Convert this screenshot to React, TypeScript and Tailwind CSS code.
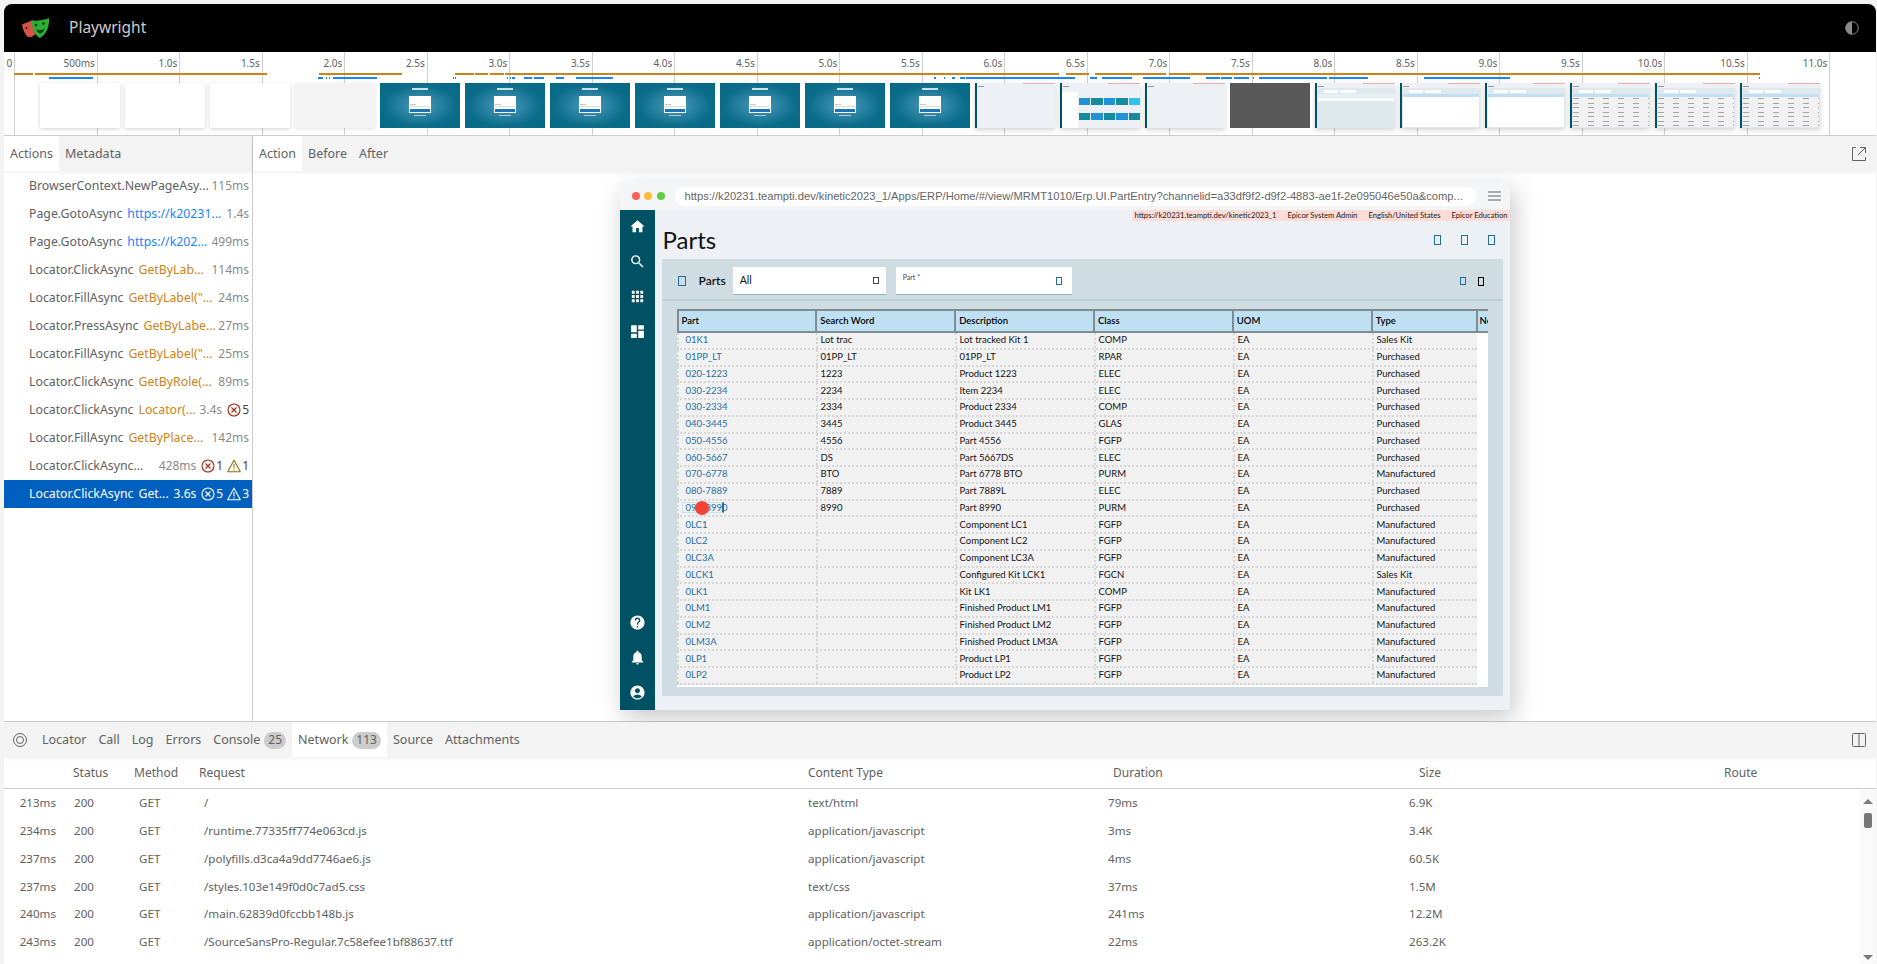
import { MdAccountCircle, MdApps, MdDashboard, MdHelp, MdHome, MdNotifications, MdSearch } from 'react-icons/md'

const ticks = ['0', '500ms', '1.0s', '1.5s', '2.0s', '2.5s', '3.0s', '3.5s', '4.0s', '4.5s', '5.0s', '5.5s', '6.0s', '6.5s', '7.0s', '7.5s', '8.0s', '8.5s', '9.0s', '9.5s', '10.0s', '10.5s', '11.0s']

const orangeBars = [[14, 33], [35, 267], [319, 402], [455, 474], [475, 488], [490, 504], [505, 1059], [1066, 1089], [1095, 1166], [1169, 1760]]
const blueBars = [[49, 93], [318, 323], [326, 327], [329, 330], [333, 377], [453, 454], [455, 456], [507, 508], [510, 511], [512, 515], [524, 532], [534, 544], [556, 564], [576, 613], [934, 936], [944, 945], [952, 955], [960, 961], [961, 965], [966, 1075], [1090, 1097], [1102, 1132], [1143, 1190], [1206, 1220], [1221, 1232], [1234, 1249], [1253, 1254], [1259, 1327], [1329, 1368], [1424, 1510], [1759, 1760]]

type Thumb = 'blank' | 'grey' | 'login' | 'app' | 'tiles' | 'dark' | 'form' | 'white' | 'grid'
const thumbs: Thumb[] = ['blank', 'blank', 'blank', 'grey', 'login', 'login', 'login', 'login', 'login', 'login', 'login', 'app', 'tiles', 'app', 'dark', 'form', 'white', 'white', 'grid', 'grid', 'grid']

type Action = { name: string; arg?: string; argColor?: 'blue' | 'orange'; time: string; errors?: number; warnings?: number }
const actions: Action[] = [
  { name: 'BrowserContext.NewPageAsy...', time: '115ms' },
  { name: 'Page.GotoAsync', arg: 'https://k20231...', argColor: 'blue', time: '1.4s' },
  { name: 'Page.GotoAsync', arg: 'https://k202...', argColor: 'blue', time: '499ms' },
  { name: 'Locator.ClickAsync', arg: 'GetByLab...', argColor: 'orange', time: '114ms' },
  { name: 'Locator.FillAsync', arg: 'GetByLabel("...', argColor: 'orange', time: '24ms' },
  { name: 'Locator.PressAsync', arg: 'GetByLabe...', argColor: 'orange', time: '27ms' },
  { name: 'Locator.FillAsync', arg: 'GetByLabel("...', argColor: 'orange', time: '25ms' },
  { name: 'Locator.ClickAsync', arg: 'GetByRole(...', argColor: 'orange', time: '89ms' },
  { name: 'Locator.ClickAsync', arg: 'Locator(...', argColor: 'orange', time: '3.4s', errors: 5 },
  { name: 'Locator.FillAsync', arg: 'GetByPlace...', argColor: 'orange', time: '142ms' },
  { name: 'Locator.ClickAsync...', time: '428ms', errors: 1, warnings: 1 },
  { name: 'Locator.ClickAsync', arg: 'Get...', time: '3.6s', errors: 5, warnings: 3 },
]

const parts = [
  ['01K1', 'Lot trac', 'Lot tracked Kit 1', 'COMP', 'EA', 'Sales Kit'],
  ['01PP_LT', '01PP_LT', '01PP_LT', 'RPAR', 'EA', 'Purchased'],
  ['020-1223', '1223', 'Product 1223', 'ELEC', 'EA', 'Purchased'],
  ['030-2234', '2234', 'Item 2234', 'ELEC', 'EA', 'Purchased'],
  ['030-2334', '2334', 'Product 2334', 'COMP', 'EA', 'Purchased'],
  ['040-3445', '3445', 'Product 3445', 'GLAS', 'EA', 'Purchased'],
  ['050-4556', '4556', 'Part 4556', 'FGFP', 'EA', 'Purchased'],
  ['060-5667', 'DS', 'Part 5667DS', 'ELEC', 'EA', 'Purchased'],
  ['070-6778', 'BTO', 'Part 6778 BTO', 'PURM', 'EA', 'Manufactured'],
  ['080-7889', '7889', 'Part 7889L', 'ELEC', 'EA', 'Purchased'],
  ['090-8990', '8990', 'Part 8990', 'PURM', 'EA', 'Purchased'],
  ['0LC1', '', 'Component LC1', 'FGFP', 'EA', 'Manufactured'],
  ['0LC2', '', 'Component LC2', 'FGFP', 'EA', 'Manufactured'],
  ['0LC3A', '', 'Component LC3A', 'FGFP', 'EA', 'Manufactured'],
  ['0LCK1', '', 'Configured Kit LCK1', 'FGCN', 'EA', 'Sales Kit'],
  ['0LK1', '', 'Kit LK1', 'COMP', 'EA', 'Manufactured'],
  ['0LM1', '', 'Finished Product LM1', 'FGFP', 'EA', 'Manufactured'],
  ['0LM2', '', 'Finished Product LM2', 'FGFP', 'EA', 'Manufactured'],
  ['0LM3A', '', 'Finished Product LM3A', 'FGFP', 'EA', 'Manufactured'],
  ['0LP1', '', 'Product LP1', 'FGFP', 'EA', 'Manufactured'],
  ['0LP2', '', 'Product LP2', 'FGFP', 'EA', 'Manufactured'],
]

const requests = [
  ['213ms', '200', 'GET', '/', 'text/html', '79ms', '6.9K'],
  ['234ms', '200', 'GET', '/runtime.77335ff774e063cd.js', 'application/javascript', '3ms', '3.4K'],
  ['237ms', '200', 'GET', '/polyfills.d3ca4a9dd7746ae6.js', 'application/javascript', '4ms', '60.5K'],
  ['237ms', '200', 'GET', '/styles.103e149f0d0c7ad5.css', 'text/css', '37ms', '1.5M'],
  ['240ms', '200', 'GET', '/main.62839d0fccbb148b.js', 'application/javascript', '241ms', '12.2M'],
  ['243ms', '200', 'GET', '/SourceSansPro-Regular.7c58efee1bf88637.ttf', 'application/octet-stream', '22ms', '263.2K'],
]

const Logo = () => (
  <svg width="28" height="22" viewBox="0 0 28 22" className="ml-[18px]">
    <path d="M0 7.500 L10 3.500 L14 17 C11 19.500 8 20.500 6 20 C3 17.500 .7 12.500 0 7.500Z" fill="#d65348" />
    <path d="M9.500 3 C13 4.500 20 3.500 27 1 C27.500 9 25 17 18 21 C13 19 10 11 9.500 3Z" fill="#2ead33" />
    <circle cx="14" cy="8" r="1.300" fill="#0b3d12" />
    <circle cx="21.500" cy="6.500" r="1.300" fill="#0b3d12" />
    <circle cx="4.500" cy="11" r="1" fill="#3a1512" />
    <path d="M14.500 12 C17 14 20 13.500 22.500 11 C22 15 19 17 17.500 16.500 C16 16 15 14 14.500 12Z" fill="#0b3d12" />
  </svg>
)

const ThemeIcon = () => (
  <svg width="14" height="14" viewBox="0 0 14 14">
    <circle cx="7" cy="7" r="6.300" fill="none" stroke="#8a8a8a" strokeWidth="1" />
    <path d="M7 .7 A6.300 6.300 0 0 0 7 13.300Z" fill="#8a8a8a" />
  </svg>
)

const Box = ({ className }: { className: string }) => <span className={`block shrink-0 border ${className}`} />

const ThumbView = ({ kind }: { kind: Thumb }) => {
  if (kind === 'blank') return <div className="h-[45px] w-[80px] shrink-0 bg-white shadow-[0_1px_4px_rgba(0,0,0,0.18)]" />
  if (kind === 'grey') return <div className="h-[45px] w-[80px] shrink-0 bg-[#f3f3f3] shadow-[0_1px_4px_rgba(0,0,0,0.12)]" />
  if (kind === 'dark') return <div className="h-[45px] w-[80px] shrink-0 bg-[#585858]" />
  if (kind === 'login') {
    return (
      <div className="flex h-[45px] w-[80px] shrink-0 flex-col items-center bg-[radial-gradient(ellipse_at_center,#4c9bbd_0%,#0b6d89_65%,#066984_100%)] pt-[5px]">
        <div className="h-[2px] w-[16px] bg-[#cfe2ea]" />
        <div className="mt-[6px] flex h-[17px] w-[22px] flex-col justify-end bg-white p-[1px]">
          <div className="mt-[1px] mb-[1px] h-[1px] w-[6px] bg-[#c8c8c8]" />
          <div className="mb-[2px] h-[1px] w-full bg-[#dddddd]" />
          <div className="h-[3px] w-full bg-[#1b74b5]" />
        </div>
        <div className="mt-[2px] h-[1px] w-[12px] bg-[#a9cbd8]" />
      </div>
    )
  }
  return (
    <div className="flex h-[45px] w-[80px] shrink-0 bg-[#edf1f5] shadow-[0_2px_5px_rgba(0,0,0,0.18)]">
      <div className="w-[2px] shrink-0 bg-[#005164]" />
      <div className="flex min-w-0 flex-1 flex-col">
        <div className="ml-auto h-[1px] w-[32px] bg-[#e5b0a8]" />
        <div className="mt-[2px] ml-[1px] h-[1px] w-[6px] bg-[#999999]" />
        {kind === 'tiles' && (
          <div className="mt-[5px] flex flex-1 gap-[1px]">
            <div className="w-[16px] bg-white" />
            <div className="flex flex-1 flex-col gap-[8px] pt-[6px]">
              <div className="grid h-[7px] grid-cols-5 gap-[1px]">
                <div className="bg-[#1f93d9]" />
                <div className="bg-[#158b9f]" />
                <div className="bg-[#1f93d9]" />
                <div className="bg-[#158b9f]" />
                <div className="bg-[#2cc2ee]" />
              </div>
              <div className="grid h-[7px] grid-cols-5 gap-[1px]">
                <div className="bg-[#158b9f]" />
                <div className="bg-[#1f93d9]" />
                <div className="bg-[#158b9f]" />
                <div className="bg-[#1f93d9]" />
                <div className="bg-[#158b9f]" />
              </div>
            </div>
          </div>
        )}
        {(kind === 'form' || kind === 'white' || kind === 'grid') && (
          <div className="mt-[1px] flex flex-1 flex-col bg-[#dfe8ec] px-[1px] pb-[1px]">
            <div className="flex h-[6px] items-center gap-[2px] pl-[6px]">
              <div className="h-[3px] w-[14px] bg-white" />
              <div className="h-[3px] w-[16px] bg-white" />
            </div>
            <div className={`h-[3px] ${kind === 'form' ? 'bg-[#e6f1f7]' : 'bg-[#bfe0f3]'}`} />
            {kind === 'form' && <div className="mt-[1px] h-[3px] bg-white" />}
            {kind === 'white' && <div className="flex-1 bg-white" />}
            {kind === 'grid' && (
              <div className="flex flex-1 flex-col justify-between bg-[#f1f1f1] py-[1px]">
                <div className="h-[1px] bg-[repeating-linear-gradient(90deg,#a5a5a5_0_6px,transparent_6px_15px)]" />
                <div className="h-[1px] bg-[repeating-linear-gradient(90deg,#a5a5a5_0_6px,transparent_6px_15px)]" />
                <div className="h-[1px] bg-[repeating-linear-gradient(90deg,#a5a5a5_0_6px,transparent_6px_15px)]" />
                <div className="h-[1px] bg-[repeating-linear-gradient(90deg,#a5a5a5_0_6px,transparent_6px_15px)]" />
                <div className="h-[1px] bg-[repeating-linear-gradient(90deg,#a5a5a5_0_6px,transparent_6px_15px)]" />
                <div className="h-[1px] bg-[repeating-linear-gradient(90deg,#a5a5a5_0_6px,transparent_6px_15px)]" />
                <div className="h-[1px] bg-[repeating-linear-gradient(90deg,#a5a5a5_0_6px,transparent_6px_15px)]" />
              </div>
            )}
          </div>
        )}
      </div>
    </div>
  )
}

const Timeline = () => (
  <div className="relative h-[84px] shrink-0 overflow-hidden border-b border-[#cccccc] bg-white">
    {ticks.map((label, i) => (
      <div key={label} className="absolute top-0 bottom-0 w-px bg-[#cfcfcf]" style={{ left: 10.3 + i * 82.5 }}>
        <span className="absolute top-[2px] right-[3px] text-[10px] leading-[18px] whitespace-nowrap text-[#616161]">{label}</span>
      </div>
    ))}
    {orangeBars.map(([a, b]) => (
      <div key={a} className="absolute top-[21px] h-[2px] bg-[#cc8418]" style={{ left: a - 4, width: b - a }} />
    ))}
    {blueBars.map(([a, b]) => (
      <div key={a} className="absolute top-[25px] h-[2px] bg-[#1a85ff]" style={{ left: a - 4, width: b - a }} />
    ))}
    <div className="absolute top-[31px] left-[36px] flex gap-[5px]">
      {thumbs.map((kind, i) => (
        <ThumbView key={i} kind={kind} />
      ))}
    </div>
  </div>
)

const ErrorIcon = ({ light }: { light: boolean }) => (
  <svg width="14" height="14" viewBox="0 0 14 14" fill="none" stroke={light ? '#ffffff' : '#a1260d'} strokeWidth="1.100">
    <circle cx="7" cy="7" r="6" />
    <path d="M4.500 4.500 L9.500 9.500 M9.500 4.500 L4.500 9.500" />
  </svg>
)

const WarnIcon = ({ light }: { light: boolean }) => (
  <svg width="14" height="14" viewBox="0 0 14 14" fill="none" stroke={light ? '#ffffff' : '#9a6c08'} strokeWidth="1.100">
    <path d="M7 1.200 L13.300 12.800 H.7Z" strokeLinejoin="round" />
    <path d="M7 5 V9.300 M7 10.300 V11.500" />
  </svg>
)

const ActionRow = ({ action, selected }: { action: Action; selected: boolean }) => (
  <div className={`flex h-[28px] items-center pr-[3px] pl-[25px] text-[12.300px] whitespace-nowrap ${selected ? 'bg-[#0060c0] text-white' : 'text-[#616161]'}`}>
    <span>{action.name}</span>
    {action.arg && (
      <span className={`ml-[5px] ${action.argColor === 'blue' ? 'text-[#1a85ff]' : action.argColor === 'orange' ? 'text-[#cc8418]' : ''}`}>{action.arg}</span>
    )}
    <span className={`ml-auto text-[12px] ${selected ? 'text-white' : 'text-[#8a8a8a]'}`}>{action.time}</span>
    {action.errors ? (
      <span className={`ml-[5px] flex items-center gap-[1px] text-[12px] ${selected ? 'text-white' : 'text-[#444444]'}`}>
        <ErrorIcon light={selected} />
        {action.errors}
      </span>
    ) : null}
    {action.warnings ? (
      <span className={`ml-[4px] flex items-center gap-[1px] text-[12px] ${selected ? 'text-white' : 'text-[#444444]'}`}>
        <WarnIcon light={selected} />
        {action.warnings}
      </span>
    ) : null}
  </div>
)

const colWidths = ['w-[139px]', 'w-[139px]', 'w-[139px]', 'w-[139px]', 'w-[139px]', 'w-[105px]']

const PartsGrid = () => (
  <div className="mx-[15px] mt-[8px] flex h-[378px] w-[811px] flex-col bg-white">
    <div className="flex h-[24px] shrink-0 border-y-2 border-[#7f8c93] bg-[#bfe0f3] text-[9.500px] font-semibold text-black">
      {['Part', 'Search Word', 'Description', 'Class', 'UOM', 'Type'].map((h, i) => (
        <div key={h} className={`flex items-center border-l-2 border-[#7f8c93] pl-[3px] ${colWidths[i]}`}>
          {h}
        </div>
      ))}
      <div className="flex w-[12px] items-center overflow-hidden border-l-2 border-[#7f8c93] pl-[2px]">Ne</div>
    </div>
    {parts.map((row) => (
      <div key={row[0]} className="flex h-[16.760px] w-[800px] shrink-0 border-b-2 border-dotted border-[#d6d6d6] bg-[#f1f1f1] text-[9.500px] leading-[14px] text-[#111111]">
        {row.map((cell, i) => (
          <div key={i} className={`flex items-center border-l-2 border-dotted border-[#d6d6d6] whitespace-nowrap ${colWidths[i]} ${i === 0 ? 'pl-[7px] text-[#1f6ea3]' : 'pl-[3px]'}`}>
            {cell === '090-8990' ? (
              <span className="relative -ml-[4px] flex h-[11px] w-[42px] items-center border border-r-2 border-[#cfe0ea] border-r-[#1f6ea3] pl-[3px]">
                {cell}
                <span className="absolute top-[-2px] left-[12px] h-[14px] w-[14px] rounded-full bg-[#f44336]" />
              </span>
            ) : (
              cell
            )}
          </div>
        ))}
      </div>
    ))}
  </div>
)

const EmbeddedApp = () => (
  <div className="flex h-[528px] w-[890px] flex-col bg-[#f4f5f6] shadow-[4px_8px_24px_rgba(0,0,0,0.22)]">
    <div className="flex h-[28px] shrink-0 items-center">
      <span className="ml-[12px] h-[8px] w-[8px] rounded-full bg-[#f8605a]" />
      <span className="ml-[4.500px] h-[8px] w-[8px] rounded-full bg-[#fdbb38]" />
      <span className="ml-[4.500px] h-[8px] w-[8px] rounded-full bg-[#5fce45]" />
      <div className="ml-[10px] flex h-[19px] w-[801px] items-center rounded-full bg-white pl-[10px] font-['Liberation_Sans',sans-serif] text-[11.200px] whitespace-nowrap text-[#666666]">
        https://k20231.teampti.dev/kinetic2023_1/Apps/ERP/Home/#/view/MRMT1010/Erp.UI.PartEntry?channelid=a33df9f2-d9f2-4883-ae1f-2e095046e50a&comp...
      </div>
      <div className="ml-[12px] flex w-[13px] flex-col gap-[2px]">
        <span className="h-[2px] bg-[#aaaaaa]" />
        <span className="h-[2px] bg-[#aaaaaa]" />
        <span className="h-[2px] bg-[#aaaaaa]" />
      </div>
    </div>
    <div className="flex min-h-0 flex-1">
      <div className="flex w-[35px] shrink-0 flex-col items-center bg-[#005164] pt-[8px] pb-[9px] text-white">
        <MdHome size={17} />
        <MdSearch size={17} className="mt-[18px]" />
        <MdApps size={17} className="mt-[18px]" />
        <MdDashboard size={17} className="mt-[18px]" />
        <MdHelp size={17} className="mt-auto" />
        <MdNotifications size={17} className="mt-[18px]" />
        <MdAccountCircle size={17} className="mt-[18px]" />
      </div>
      <div className="relative min-w-0 flex-1 bg-[#edf1f5] font-['Lato',sans-serif]">
        <div className="ml-auto flex h-[11px] w-[377px] items-center justify-between bg-[#fcdcd6] px-[2px] text-[7.600px] whitespace-nowrap text-[#222222]">
          <span>https://k20231.teampti.dev/kinetic2023_1</span>
          <span>Epicor System Admin</span>
          <span>English/United States</span>
          <span>Epicor Education</span>
        </div>
        <div className="flex h-[38px] items-center pl-[8px]">
          <span className="text-[24px] leading-none text-[#111111]">Parts</span>
          <div className="mr-[15px] ml-auto flex gap-[20px]">
            <Box className="h-[10px] w-[7px] border-[#1f6ea3]" />
            <Box className="h-[10px] w-[7px] border-[#1f6ea3]" />
            <Box className="h-[10px] w-[7px] border-[#1f6ea3]" />
          </div>
        </div>
        <div className="ml-[7px] h-[437px] w-[841px] rounded-[1px] bg-[#cfdde3]">
          <div className="flex h-[42px] items-center border-b-2 border-[#bfd2da] pt-[4px] pl-[16px]">
            <Box className="h-[10px] w-[8px] border-[#1f6ea3]" />
            <span className="ml-[13px] text-[12px] font-semibold text-[#111111]">Parts</span>
            <div className="ml-[7px] flex h-[28px] w-[153px] items-center justify-between border-b border-[#8fb5c9] bg-white px-[7px] text-[10.500px] text-[#111111]">
              All
              <Box className="h-[7px] w-[6px] border-[#444444]" />
            </div>
            <div className="relative ml-[10px] flex h-[28px] w-[176px] items-center justify-end border-b border-[#8fb5c9] bg-white pr-[10px]">
              <span className="absolute top-[5px] left-[7px] text-[7px] text-[#444444]">Part *</span>
              <Box className="h-[8px] w-[6px] border-[#1f6ea3]" />
            </div>
            <div className="mr-[19px] ml-auto flex items-center gap-[12px]">
              <Box className="h-[8px] w-[6px] border-[#1f6ea3]" />
              <Box className="h-[9px] w-[6px] border-black" />
            </div>
          </div>
          <PartsGrid />
        </div>
      </div>
    </div>
  </div>
)

const Tab = ({ label, active, badge }: { label: string; active?: boolean; badge?: string }) => (
  <div className={`flex h-full items-center px-[6px] pt-[1px] text-[12.500px] whitespace-nowrap text-[#616161] ${active ? 'bg-white' : ''}`}>
    {label}
    {badge && <span className="ml-[4px] flex h-[17px] items-center rounded-full bg-[#cccccc] px-[4px] text-[12px]">{badge}</span>}
  </div>
)

export default function App() {
  return (
    <div className="h-[964px] w-[1877px] overflow-hidden bg-[#f3f3f3] pt-[4px] pr-[1px] pl-[4px] font-['Noto_Sans',sans-serif]">
      <div className="flex h-[960px] flex-col overflow-hidden rounded-t-[8px] bg-white">
        <header className="flex h-[48px] shrink-0 items-center bg-black text-[#cccccc]">
          <Logo />
          <span className="ml-[19px] text-[15.500px]">Playwright</span>
          <div className="mr-[17px] ml-auto">
            <ThemeIcon />
          </div>
        </header>
        <Timeline />
        <div className="flex h-[586px] shrink-0 border-b border-[#cccccc]">
          <aside className="flex w-[249px] shrink-0 flex-col border-r border-[#cccccc]">
            <div className="flex h-[35px] shrink-0 bg-[#f3f3f3] shadow-[0_2px_4px_rgba(0,0,0,0.06)]">
              <Tab label="Actions" active />
              <Tab label="Metadata" />
            </div>
            <div className="pt-[1px]">
              {actions.map((action, i) => (
                <ActionRow key={i} action={action} selected={i === actions.length - 1} />
              ))}
            </div>
          </aside>
          <main className="flex min-w-0 flex-1 flex-col">
            <div className="flex h-[35px] shrink-0 items-center bg-[#f3f3f3] pr-[9px] shadow-[0_2px_4px_rgba(0,0,0,0.06)]">
              <Tab label="Action" active />
              <Tab label="Before" />
              <Tab label="After" />
              <svg width="16" height="16" viewBox="0 0 16 16" fill="none" stroke="#616161" className="ml-auto">
                <path d="M5 1.500 H1.500 V14.500 H14.500 V11 M9 1.500 H14.500 V7 M14.500 1.500 L7 9" />
              </svg>
            </div>
            <div className="flex flex-1 items-center justify-center">
              <EmbeddedApp />
            </div>
          </main>
        </div>
        <div className="relative flex min-h-0 flex-1 flex-col">
          <div className="flex h-[35px] shrink-0 items-center bg-[#f3f3f3] pr-[9px] shadow-[0_2px_4px_rgba(0,0,0,0.06)]">
            <svg width="16" height="16" viewBox="0 0 16 16" fill="none" stroke="#616161" className="mr-[8px] ml-[8px]">
              <circle cx="8" cy="8" r="6.500" />
              <circle cx="8" cy="8" r="3.500" />
            </svg>
            <Tab label="Locator" />
            <Tab label="Call" />
            <Tab label="Log" />
            <Tab label="Errors" />
            <Tab label="Console" badge="25" />
            <Tab label="Network" badge="113" active />
            <Tab label="Source" />
            <Tab label="Attachments" />
            <svg width="16" height="16" viewBox="0 0 16 16" fill="none" stroke="#616161" className="ml-auto">
              <rect x="1.500" y="1.500" width="13" height="13" rx="1" />
              <path d="M8 1.500 V14.500" />
            </svg>
          </div>
          <div className="grid h-[32px] shrink-0 grid-cols-[69px_61px_65px_609px_305px_306px_305px_1fr] items-center border-b border-[#cccccc] text-[12px] text-[#616161]">
            <span />
            <span>Status</span>
            <span>Method</span>
            <span>Request</span>
            <span>Content Type</span>
            <span>Duration</span>
            <span>Size</span>
            <span>Route</span>
          </div>
          {requests.map((r, i) => (
            <div key={i} className="grid h-[27.800px] shrink-0 grid-cols-[70px_65px_65px_604px_300px_301px_1fr] items-center text-[11.600px] text-[#616161]">
              <span className="pr-[18px] text-right">{r[0]}</span>
              <span>{r[1]}</span>
              <span>{r[2]}</span>
              <span>{r[3]}</span>
              <span>{r[4]}</span>
              <span>{r[5]}</span>
              <span>{r[6]}</span>
            </div>
          ))}
          <div className="absolute top-[67px] right-0 bottom-0 flex w-[16px] flex-col items-center bg-[#fafafa]">
            <span className="mt-[10px] h-0 w-0 border-x-[5px] border-b-[5px] border-x-transparent border-b-[#7a7a7a]" />
            <span className="mt-[9px] h-[15px] w-[8px] rounded-[2px] bg-[#787878]" />
            <span className="mt-auto mb-[4px] h-0 w-0 border-x-[5px] border-t-[5px] border-x-transparent border-t-[#7a7a7a]" />
          </div>
        </div>
      </div>
    </div>
  )
}
